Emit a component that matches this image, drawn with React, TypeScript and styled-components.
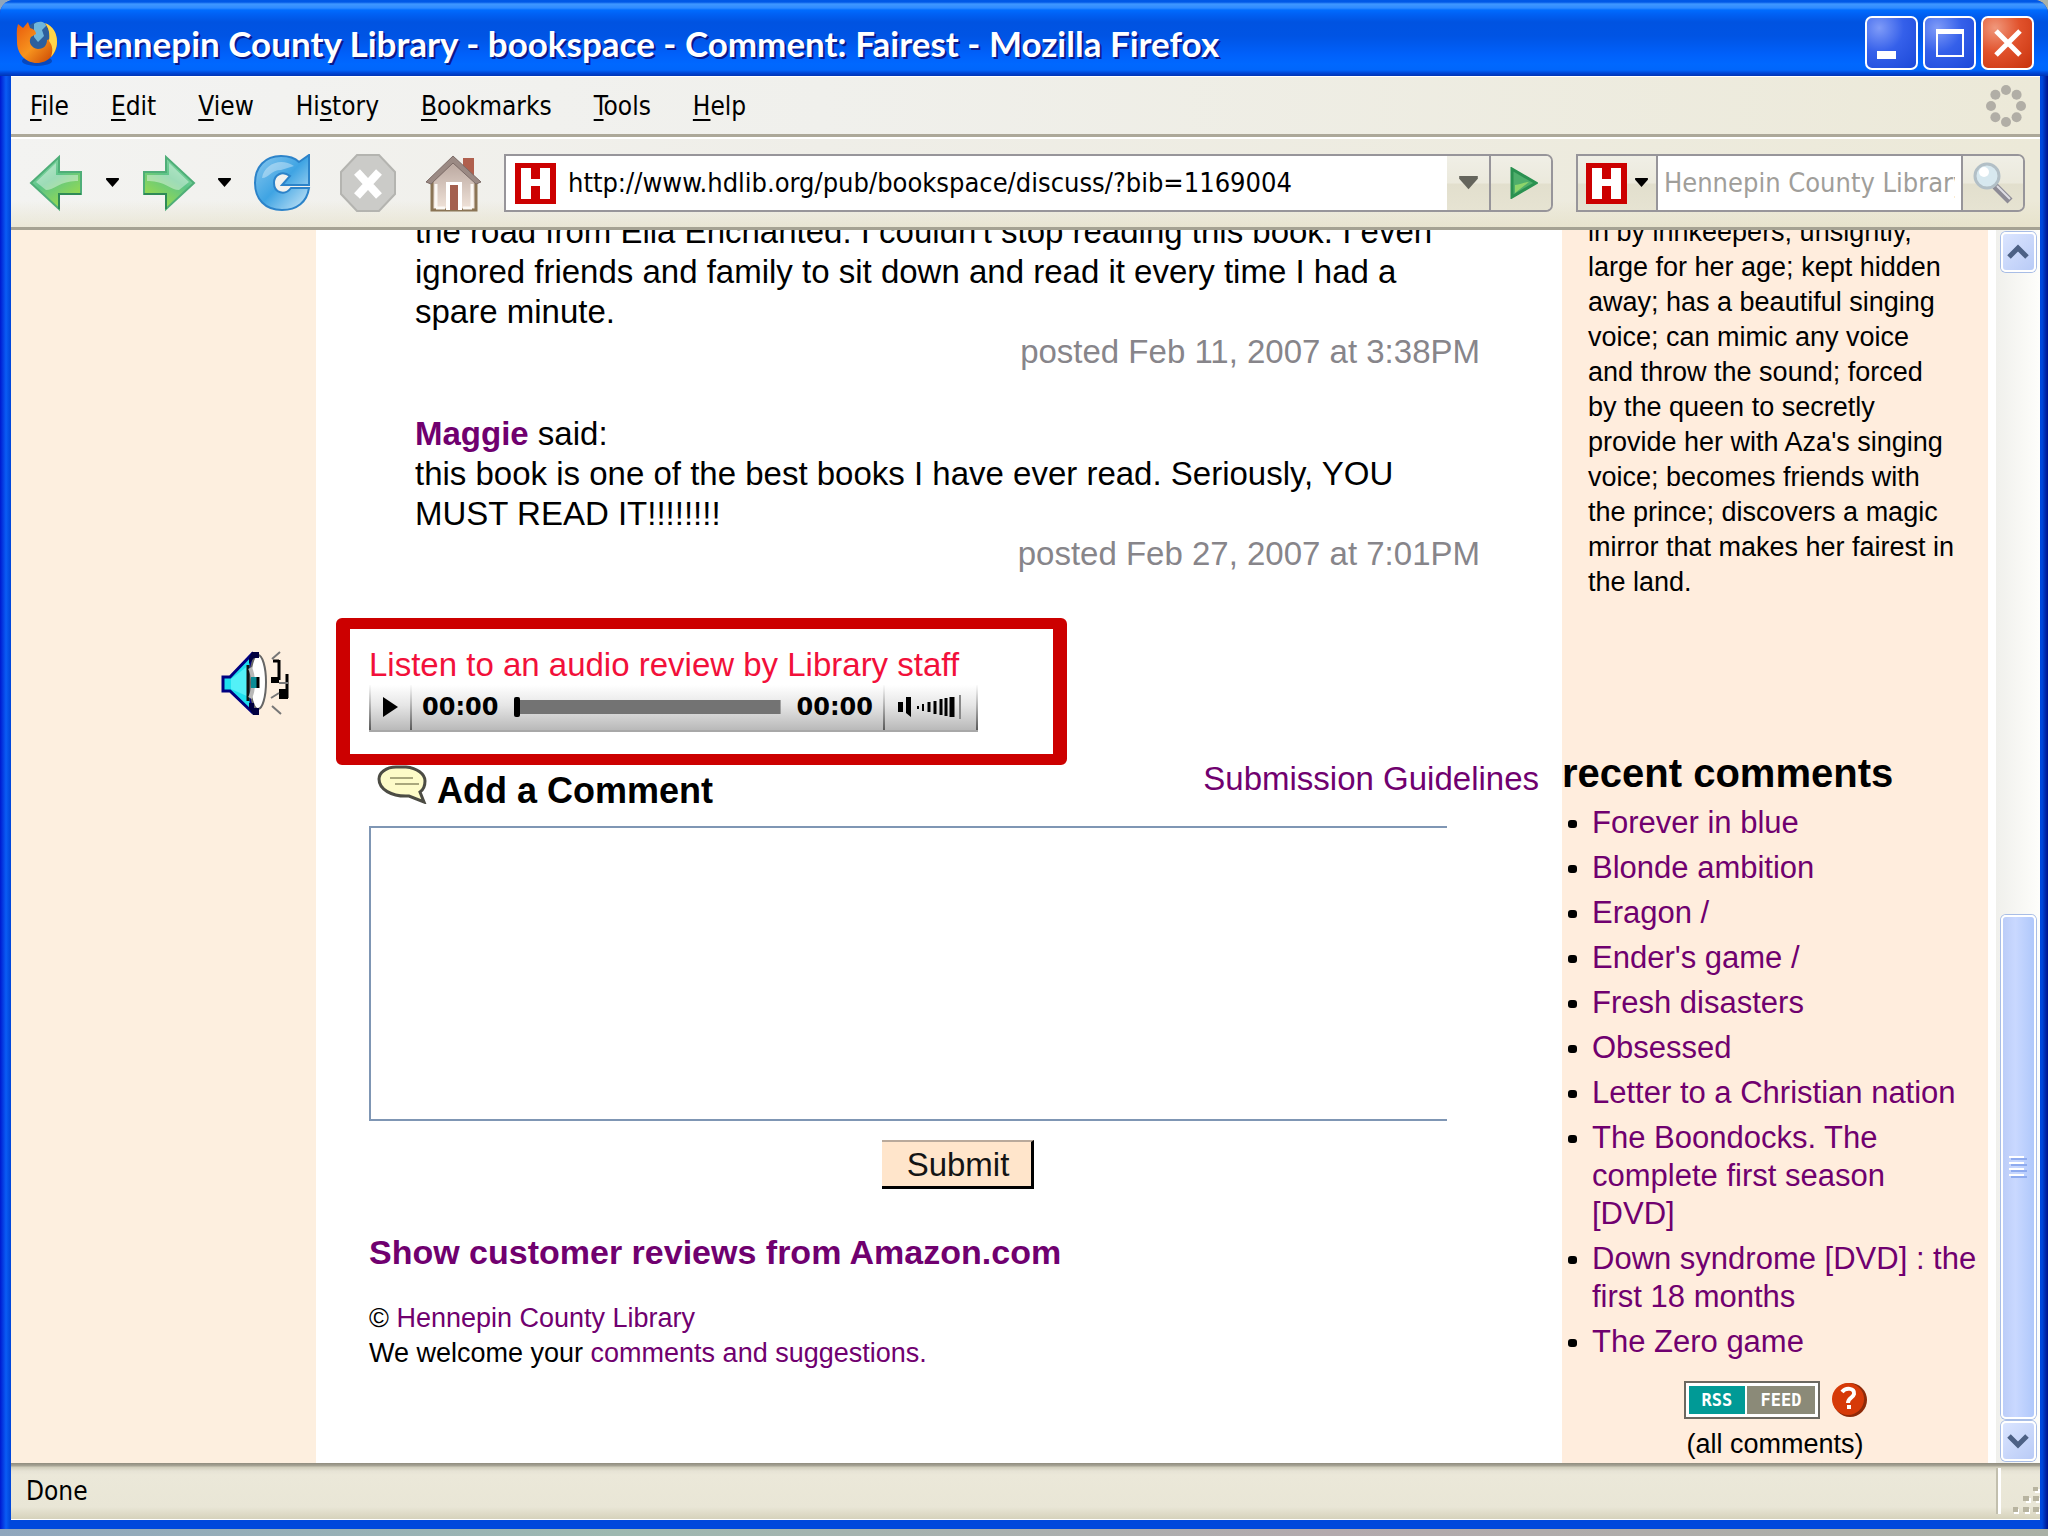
import React from "react";
import styled, { createGlobalStyle } from "styled-components";

const ui = '"DejaVu Sans Condensed", "Noto Sans", sans-serif';
const sans = '"Liberation Sans", Arial, sans-serif';
const purple = "#70006f";

const GlobalStyle = createGlobalStyle`
  * { box-sizing: border-box; }
  html, body, #root { height: 100%; margin: 0; }
  body { background: #9fb0b4; font-family: ${sans}; color: #000; overflow: hidden; }
  button { font: inherit; color: inherit; margin: 0; }
  h1, h2, p, ul { margin: 0; padding: 0; }
  a { text-decoration: none; }
  svg { display: block; flex: none; }
`;

/* ---------- window frame ---------- */

const Desktop = styled.div`
  height: 100vh;
  padding-bottom: 7px;
  background: linear-gradient(90deg, #8fa6bd, #9db8b0 30%, #b3a9ad 65%, #a9b0a6);
`;

const Window = styled.div`
  height: 100%;
  display: flex;
  flex-direction: column;
  border-radius: 14px 14px 0 0;
  overflow: hidden;
  background: linear-gradient(90deg, #0019cf, #0a5cf5 6px, #0048dc 10px, #0048dc calc(100% - 6px), #00138c);
`;

const TitleBar = styled.header`
  height: 76px;
  flex: none;
  display: flex;
  align-items: center;
  gap: 10px;
  padding: 10px 14px 0 16px;
  background: linear-gradient(
    #0058e6 0, #0058e6 2px, #3f97ff 4px, #2f8bff 8px, #006cff 10px, #0061f5 14px,
    #0053e1 22px, #0054e4 36px, #0060fa 54px, #0068ff 64px, #0066fc 70px, #0046d6 73px, #0034b4 76px
  );
`;

const Title = styled.h1`
  flex: 1;
  font: 700 35px/40px Lato, "Open Sans", sans-serif;
  color: #fff;
  text-shadow: 2px 2px 0 #0a1a8c;
  white-space: nowrap;
`;

const Caption = styled.button<{ $close?: boolean }>`
  width: 53px;
  height: 54px;
  padding: 0;
  border: 2px solid #fff;
  border-radius: 7px;
  display: grid;
  place-items: center;
  background: ${(p) =>
    p.$close
      ? "radial-gradient(circle at 25% 20%, #f0987c, #e1522c 45%, #c8320c)"
      : "radial-gradient(circle at 25% 20%, #7f9bf8, #3560ea 45%, #1c48d8)"};
`;

const CaptionGroup = styled.div`
  display: flex;
  gap: 5px;
`;

const Client = styled.div`
  flex: 1;
  min-height: 0;
  margin: 0 8px 9px 11px;
  display: flex;
  flex-direction: column;
`;

/* ---------- menu and toolbars ---------- */

const MenuBar = styled.nav`
  height: 61px;
  flex: none;
  display: flex;
  align-items: center;
  gap: 42px;
  padding: 0 14px 0 19px;
  border-top: 1px solid #fff;
  border-bottom: 3px solid #aca899;
  background: linear-gradient(90deg, #f3f3f2, #f0f0ec 40%, #ece9d8);
`;

const MenuItem = styled.button`
  padding: 0;
  border: 0;
  background: none;
  font: 26px/32px ${ui};
  u { text-underline-offset: 4px; text-decoration-thickness: 2px; }
`;

const Spacer = styled.span`
  flex: 1;
`;

const Toolbar = styled.div`
  height: 93px;
  flex: none;
  display: flex;
  align-items: center;
  padding: 0 15px 0 17px;
  border-top: 2px solid #fff;
  border-bottom: 3px solid #a5a293;
  background: linear-gradient(rgba(255, 255, 255, 0) 70%, rgba(226, 220, 190, 0.5)),
    linear-gradient(90deg, #f3f3f1, #efeee8 40%, #ece9d8);
`;

const NavButtons = styled.div`
  display: flex;
  align-items: center;
  margin-right: 22px;
`;

const IconButton = styled.button<{ $gap?: number }>`
  padding: 0;
  border: 0;
  background: none;
  margin-right: ${(p) => p.$gap ?? 0}px;
`;

const Field = styled.form<{ $grow?: boolean }>`
  height: 58px;
  display: flex;
  border: 2px solid #97959a;
  border-radius: 0 7px 7px 0;
  overflow: hidden;
  background: #ebe9da;
  ${(p) => (p.$grow ? "flex: 1; min-width: 0; margin-right: 23px;" : "width: 449px;")}
`;

const AddressPart = styled.label`
  flex: 1;
  min-width: 0;
  display: flex;
  align-items: center;
  gap: 12px;
  padding-left: 9px;
  background: #fff;
`;

const TextInput = styled.input<{ $hint?: boolean }>`
  flex: 1;
  min-width: 0;
  width: 100%;
  border: 0;
  padding: 0;
  outline: 0;
  background: #fff;
  font: 27px/32px ${ui};
  color: ${(p) => (p.$hint ? "#a09e9a" : "#000")};
  ${(p) => (p.$hint ? "padding: 0 6px; border-right: 2px solid #97959a; border-left: 2px solid #97959a;" : "")}
  &::placeholder { color: #a09e9a; opacity: 1; }
`;

const FieldButton = styled.button<{ $w: number; $rule?: boolean }>`
  width: ${(p) => p.$w}px;
  flex: none;
  padding: 0;
  border: 0;
  border-left: ${(p) => (p.$rule ? "2px solid #97959a" : "0")};
  display: flex;
  align-items: center;
  justify-content: center;
  gap: 8px;
  background: linear-gradient(#f0efe6, #ebe9dc 50%, #e2dfcd 52%, #e6e3d2);
`;

/* ---------- page ---------- */

const Viewport = styled.div`
  flex: 1;
  min-height: 0;
  display: flex;
  overflow: hidden;
  background: #fff;
`;

const Gutter = styled.aside`
  width: 305px;
  flex: none;
  padding: 421px 25px 0 0;
  display: flex;
  justify-content: flex-end;
  align-items: flex-start;
  background: #fdefdf;
`;

const Main = styled.main`
  flex: 1;
  min-width: 0;
  font-size: 33px;
  line-height: 40px;
`;

const Comments = styled.section`
  display: flex;
  flex-direction: column;
  gap: 42px;
  margin-top: -18px;
  padding: 0 82px 0 99px;
`;

const Posted = styled.p`
  text-align: right;
  color: #87858a;
`;

const Link = styled.a<{ $bold?: boolean }>`
  color: ${purple};
  font-weight: ${(p) => (p.$bold ? 700 : 400)};
`;

const AudioBox = styled.section`
  width: 731px;
  max-width: 100%;
  margin: 44px 0 0 20px;
  padding: 16px 19px 22px;
  border: solid #cc0000;
  border-width: 11px 14px;
  border-radius: 6px;
`;

const AudioTitle = styled.p`
  color: #f2103a;
`;

const Player = styled.div`
  width: 609px;
  height: 47px;
  display: flex;
  align-items: stretch;
  border-bottom: 2px solid #a8a8a8;
  background: linear-gradient(#fff, #e6e6e6 45%, #b9b9b9);
`;

const PlayerCell = styled.button<{ $w: number }>`
  width: ${(p) => p.$w}px;
  flex: none;
  padding: 0 0 2px;
  display: grid;
  place-items: center;
  background: none;
  border: solid;
  border-width: 0 2px;
  border-image: linear-gradient(#ffffff, #555) 1;
`;

const Track = styled.div`
  flex: 1;
  display: flex;
  align-items: center;
  gap: 16px;
  padding: 0 10px 2px;
  font: 700 24px/24px "DejaVu Sans", sans-serif;
`;

const Seek = styled.input`
  flex: 1;
  min-width: 0;
  height: 20px;
  margin: 0;
  appearance: none;
  background: linear-gradient(#737373, #737373) center / 100% 14px no-repeat;
  &::-webkit-slider-thumb {
    appearance: none;
    width: 6px;
    height: 20px;
    border-radius: 2px;
    background: #000;
  }
`;

const CommentForm = styled.form`
  padding: 0 15px 0 53px;
`;

const FormHead = styled.div`
  height: 61px;
  display: flex;
  align-items: flex-start;
  padding: 0 8px;
`;

const FormTitle = styled.label`
  flex: 1;
  padding: 6px 0 0 10px;
  font-size: 36px;
  font-weight: 700;
`;

const Guidelines = styled(Link)`
  line-height: 28px;
`;

const CommentText = styled.textarea`
  display: block;
  width: calc(100% - 100px);
  height: 295px;
  border: 2px solid #7f96b4;
  border-right: 0;
  background: #fff;
  resize: none;
  outline: 0;
  font: inherit;
`;

const Submit = styled.button`
  display: block;
  height: 49px;
  margin: 19px auto 0;
  padding: 2px 22px 0 25px;
  border: solid #000;
  border-width: 2px 3px 3px 0;
  border-top-color: #b9a99b;
  background: #ffe5cb;
  color: #141414;
`;

const PageFoot = styled.footer`
  padding: 43px 0 0 53px;
`;

const ReviewsLink = styled(Link)`
  font-size: 34px;
`;

const Legal = styled.p`
  margin-top: 28px;
  font-size: 27px;
  line-height: 35px;
`;

const Side = styled.aside`
  width: 426px;
  flex: none;
  margin-right: 8px;
  background: #ffeddd;
`;

const Blurb = styled.p`
  margin-top: -15px;
  padding: 0 30px 0 26px;
  font-size: 27px;
  line-height: 35px;
`;

const SideTitle = styled.h2`
  margin-top: 151px;
  font-size: 40px;
  line-height: 44px;
`;

const Recent = styled.ul`
  display: flex;
  flex-direction: column;
  gap: 7px;
  margin-top: 9px;
  list-style: none;
  font-size: 31px;
  line-height: 38px;
  white-space: pre-line;
`;

const RecentItem = styled.li`
  display: flex;
  &::before {
    content: "";
    flex: none;
    width: 9px;
    height: 8px;
    margin: 16px 15px 0 6px;
    border-radius: 3px;
    background: #000;
  }
`;

const Feed = styled.div`
  display: flex;
  justify-content: center;
  gap: 11px;
  margin-top: 20px;
`;

const RssBadge = styled.a`
  width: 136px;
  height: 38px;
  display: flex;
  gap: 2px;
  padding: 3px;
  border: 2px solid #6b6860;
  background: #fff;
  color: #fff;
  font: 700 17px/28px "DejaVu Sans Mono", monospace;
`;

const RssHalf = styled.span<{ $bg: string }>`
  flex: 1 0 auto;
  text-align: center;
  background: ${(p) => p.$bg};
`;

const AllComments = styled.p`
  margin-top: 8px;
  text-align: center;
  font-size: 27px;
  line-height: 35px;
`;

/* ---------- scroll bar and status bar ---------- */

const ScrollBar = styled.div`
  width: 44px;
  flex: none;
  display: flex;
  flex-direction: column;
  align-items: center;
  gap: 2px;
  padding: 2px 0;
  background: linear-gradient(90deg, #f0f0ec, #fefefb);
`;

const ScrollButton = styled.button`
  width: 35px;
  height: 40px;
  flex: none;
  padding: 0;
  display: grid;
  place-items: center;
  border: 2px solid #fff;
  border-radius: 5px;
  box-shadow: 0 0 0 1px #a8bde6;
  background: linear-gradient(135deg, #dbe5ff, #b9cbf6);
`;

const Rail = styled.div`
  flex: 1;
  width: 35px;
  display: flex;
  flex-direction: column;
  justify-content: flex-end;
`;

const Thumb = styled.div`
  height: 44%;
  display: grid;
  align-content: center;
  justify-content: center;
  border: 2px solid #fff;
  border-radius: 5px;
  box-shadow: 0 0 0 1px #a8bde6;
  background: linear-gradient(90deg, #bccdf8, #c9d8ff 40%, #b0c8fb);
`;

const StatusBar = styled.footer`
  height: 57px;
  flex: none;
  display: flex;
  align-items: center;
  padding-left: 15px;
  border-bottom: 1px solid #fff;
  background: linear-gradient(#8f8c7e 0, #a9a698 3px, #cfccba 4px, #e6e3d5 8px, #ebe8d9 12px, #e9e6d6 44px, #d6d2bb);
  font: 26px/32px ${ui};
`;

const Grip = styled.div`
  width: 44px;
  align-self: stretch;
  margin: 5px 0;
  border-left: 2px solid #c2bfae;
  box-shadow: inset 3px 0 0 #fff;
  display: flex;
  align-items: flex-end;
  justify-content: flex-end;
`;

/* ---------- drawings ---------- */

const Firefox = () => (
  <svg width="42" height="50" viewBox="0 0 42 50">
    <defs>
      <linearGradient id="fox" x1="0" y1="0" x2="1" y2="1">
        <stop offset="0" stopColor="#e8590c" />
        <stop offset=".5" stopColor="#f7941e" />
        <stop offset="1" stopColor="#c43c00" />
      </linearGradient>
    </defs>
    <ellipse cx="21" cy="43" rx="15" ry="5" fill="#0b2a80" opacity=".5" />
    <circle cx="23" cy="20" r="16" fill="#2c5f9e" />
    <path d="M18 6c5-4 12-2 12 2l-4 4 2 6-6 6-4-5z" fill="#6fb6dc" />
    <path d="M2 6l5 4 5-6 2 6c4 1 6 3 6 6l-5 3c-3 5 0 11 7 12 6 0 9-4 9-9l3-1c0-6-1-11-5-15 7 2 12 9 12 18 0 12-9 21-20 21S1 36 1 24c0-6-1-12 1-18z" fill="url(#fox)" />
    <path d="M29 5c8 3 12 10 12 19 0 6-3 12-6 15 2-6 2-11-2-16 1-7 0-13-4-18z" fill="#ffd54a" />
  </svg>
);

const Arrow = ({ flip }: { flip?: boolean }) => (
  <svg width="55" height="58" viewBox="0 0 55 58">
    <defs>
      <linearGradient id={flip ? "gf" : "gb"} x1="0" y1="0" x2=".6" y2="1">
        <stop offset="0" stopColor="#9fe3b8" />
        <stop offset=".5" stopColor="#5cc487" />
        <stop offset="1" stopColor="#9bdc4c" />
      </linearGradient>
    </defs>
    <g transform={flip ? "matrix(-1 0 0 1 55 0)" : undefined}>
      <path d="M3 29L31 3v15h22v22H31v15z" fill={`url(#${flip ? "gf" : "gb"})`} stroke="#4fae78" strokeWidth="2" />
      <path d="M31 55V40h22" fill="none" stroke="#2f8a56" strokeWidth="2" />
      <path d="M8 28L28 9v12h22v6C34 26 26 36 18 36z" fill="#fff" opacity=".4" />
    </g>
  </svg>
);

const Caret = ({ color = "#000", w = 13 }: { color?: string; w?: number }) => (
  <svg width={w} height={w * 0.7} viewBox="0 0 14 10">
    <path d="M0 0h14v2L7 10 0 2z" fill={color} />
  </svg>
);

const Reload = () => (
  <svg width="58" height="58" viewBox="0 0 58 58">
    <defs>
      <linearGradient id="rl" x1="0" y1="0" x2="1" y2="1">
        <stop offset="0" stopColor="#8cc9ef" />
        <stop offset=".5" stopColor="#3fa4e3" />
        <stop offset="1" stopColor="#cfe9f8" />
      </linearGradient>
    </defs>
    <path d="M28 2c8 0 14 2 18 6l10-7v30H29l8-9c-8-6-16-1-16 7 0 10 11 13 17 5h18C54 48 44 56 29 56 12 56 2 45 2 29S12 2 28 2z" fill="url(#rl)" stroke="#2c83c9" strokeWidth="2" />
    <path d="M9 24C11 10 28 3 41 12L28 16C18 16 16 24 9 24z" fill="#fff" opacity=".35" />
  </svg>
);

const Stop = () => (
  <svg width="56" height="58" viewBox="0 0 56 58">
    <path d="M17 1h22l16 17v22L39 57H17L1 40V18z" fill="#cbcbc8" stroke="#b4b4b0" strokeWidth="2" />
    <path d="M17 18l22 24M39 18L17 42" stroke="#fff" strokeWidth="8" />
  </svg>
);

const Home = () => (
  <svg width="57" height="58" viewBox="0 0 57 58">
    <defs>
      <linearGradient id="wall" x1="0" y1="0" x2="0" y2="1">
        <stop offset="0" stopColor="#b7a49c" />
        <stop offset="1" stopColor="#f1e4da" />
      </linearGradient>
    </defs>
    <path d="M38 4h11v20H38z" fill="#b0604e" />
    <path d="M7 27L28 6l23 21v29H7z" fill="url(#wall)" stroke="#8a7455" strokeWidth="3" />
    <path d="M11 30v24M47 30v24M11 54h9M38 54h9" stroke="#fbf8f4" strokeWidth="3" />
    <path d="M1 28L28 2l28 26-5 2L28 9 6 30z" fill="#9b8a84" stroke="#7d6c68" />
    <path d="M21 28h16v28H21z" fill="#fff" />
    <path d="M25 31h8v25h-8z" fill="#a4604f" />
  </svg>
);

const LibraryMark = () => (
  <svg width="41" height="41" viewBox="0 0 41 41">
    <path d="M0 0h41v41H0z" fill="#cc0000" />
    <path d="M6 5h10v11h9V5h10v31H25V23h-9v13H6z" fill="#fff" />
  </svg>
);

const Go = () => (
  <svg width="34" height="32" viewBox="-6 0 34 32">
    <path d="M2 2l24 14L2 30z" fill="#4fae6b" stroke="#2a9150" strokeWidth="3" />
    <path d="M5 18c6 0 9-3 14-3L5 26z" fill="#8ed46a" />
  </svg>
);

const Lens = () => (
  <svg width="40" height="42" viewBox="0 0 40 42">
    <path d="M22 24l15 15" stroke="#8d8b95" strokeWidth="7" />
    <path d="M24 24l13 13" stroke="#dedee4" strokeWidth="2" />
    <circle cx="14" cy="14" r="12" fill="#d7e8ef" stroke="#b2bfc6" strokeWidth="3" />
    <circle cx="11" cy="10" r="5" fill="#fff" />
  </svg>
);

const Throbber = () => (
  <svg width="40" height="42" viewBox="0 0 40 42" fill="#b1aea6">
    {[0, 1, 2, 3, 4, 5, 6, 7].map((n) => (
      <circle key={n} cx={20 + 15 * Math.sin((n * Math.PI) / 4)} cy={21 - 16 * Math.cos((n * Math.PI) / 4)} r="5" />
    ))}
  </svg>
);

const Speaker = () => (
  <svg width="70" height="64" viewBox="0 0 70 64">
    <path d="M2 26h7L30 4v56L9 40H2z" fill="#1fe0ee" stroke="#000080" strokeWidth="3" />
    <path d="M10 28l18-14v32L10 38z" fill="#8ff" opacity=".5" />
    <ellipse cx="37" cy="31" rx="8" ry="27" fill="#fff" stroke="#666" strokeWidth="2" />
    <path d="M31 1h7v6h-5l-5 6v-6zM28 52h5v5h5v7h-6l-4-7z" fill="#000040" />
    <path d="M27 14v36" stroke="#111" strokeWidth="3" />
    <path d="M29 17c4 8 4 22 0 30" fill="none" stroke="#b8b8b8" strokeWidth="4" />
    <path d="M30 26h7v11h-7z" fill="#0a8c96" />
    <path d="M37 26v11" stroke="#000" strokeWidth="3" />
    <path d="M58 9v20M58 10h-6M66 23v24" stroke="#000" strokeWidth="3" />
    <path d="M50 26h8v6h-8zM58 38h9v10h-9z" />
    <path d="M51 8l8-7M58 32h9M50 47l8-5M51 55l9 8" stroke="#777" strokeWidth="2" />
  </svg>
);

const Volume = () => (
  <svg width="66" height="26" viewBox="0 0 66 26">
    <path d="M0 8h5v10H0zM8 3h5v20l-5-4V8z" />
    <path d="M20 12v3M25 10v7" stroke="#000" strokeWidth="2" />
    <path d="M31 8v10M37 7v13M43 5v16M48 4v18" stroke="#000" strokeWidth="3" />
    <path d="M54 3v20" stroke="#000" strokeWidth="5" />
    <path d="M62 1v24" stroke="#888" strokeWidth="2" />
  </svg>
);

const Bubble = () => (
  <svg width="50" height="39" viewBox="0 0 50 39">
    <path d="M19 2h10c11 1 19 7 19 14 0 5-2 9-5 11l4 10-15-6C14 32 2 24 2 14 2 8 9 2 19 2z" fill="#fdfbc8" stroke="#4c4c44" strokeWidth="3" />
    <path d="M13 13h23M18 19h24" stroke="#a9a77c" strokeWidth="2" />
  </svg>
);

const Help = () => (
  <svg width="36" height="37" viewBox="0 0 36 37">
    <circle cx="19" cy="19" r="17" fill="#8e2a08" />
    <circle cx="17" cy="18" r="16" fill="#d63a08" />
    <path d="M11 11c4-5 13-4 12 2-1 4-6 4-6 9M16 26h4" fill="none" stroke="#fff" strokeWidth="4" />
  </svg>
);

const Chevron = ({ down }: { down?: boolean }) => (
  <svg width="22" height="16" viewBox="0 0 22 16">
    <path d={down ? "M2 3l9 9 9-9" : "M2 13l9-9 9 9"} fill="none" stroke="#4d6185" strokeWidth="5" />
  </svg>
);

const menus: [string, string, string][] = [
  ["", "F", "ile"],
  ["", "E", "dit"],
  ["", "V", "iew"],
  ["Hi", "s", "tory"],
  ["", "B", "ookmarks"],
  ["", "T", "ools"],
  ["", "H", "elp"],
];

const recent = [
  "Forever in blue",
  "Blonde ambition",
  "Eragon /",
  "Ender's game /",
  "Fresh disasters",
  "Obsessed",
  "Letter to a Christian nation",
  "The Boondocks. The\ncomplete first season\n[DVD]",
  "Down syndrome [DVD] : the\nfirst 18 months",
  "The Zero game",
];

export default function App() {
  return (
    <Desktop>
      <GlobalStyle />
      <Window>
        <TitleBar>
          <Firefox />
          <Title>Hennepin County Library - bookspace - Comment: Fairest - Mozilla Firefox</Title>
          <CaptionGroup>
            <Caption aria-label="Minimize">
              <svg width="38" height="38" viewBox="0 0 38 38"><path d="M4 27h19v8H4z" fill="#fff" /></svg>
            </Caption>
            <Caption aria-label="Maximize">
              <svg width="28" height="28" viewBox="0 0 28 28">
                <path d="M1 1h26v26H1z" fill="none" stroke="#fff" strokeWidth="2" />
                <path d="M0 0h28v5H0z" fill="#fff" />
              </svg>
            </Caption>
            <Caption $close aria-label="Close">
              <svg width="28" height="28" viewBox="0 0 28 28"><path d="M2 2l24 24M26 2L2 26" stroke="#fff" strokeWidth="5" /></svg>
            </Caption>
          </CaptionGroup>
        </TitleBar>
        <Client>
          <MenuBar>
            {menus.map(([a, b, c]) => (
              <MenuItem key={b + c}>{a}<u>{b}</u>{c}</MenuItem>
            ))}
            <Spacer />
            <Throbber />
          </MenuBar>
          <Toolbar>
            <NavButtons>
              <IconButton aria-label="Back" $gap={23}><Arrow /></IconButton>
              <IconButton aria-label="Back history" $gap={23}><Caret /></IconButton>
              <IconButton aria-label="Forward" $gap={21}><Arrow flip /></IconButton>
              <IconButton aria-label="Forward history" $gap={22}><Caret /></IconButton>
              <IconButton aria-label="Reload" $gap={29}><Reload /></IconButton>
              <IconButton aria-label="Stop" $gap={29}><Stop /></IconButton>
              <IconButton aria-label="Home"><Home /></IconButton>
            </NavButtons>
            <Field $grow onSubmit={(e) => e.preventDefault()}>
              <AddressPart>
                <LibraryMark />
                <TextInput aria-label="Address" defaultValue="http://www.hdlib.org/pub/bookspace/discuss/?bib=1169004" />
              </AddressPart>
              <FieldButton type="button" $w={42} aria-label="Address history"><Caret color="#65655c" w={19} /></FieldButton>
              <FieldButton $w={62} $rule aria-label="Go"><Go /></FieldButton>
            </Field>
            <Field onSubmit={(e) => e.preventDefault()}>
              <FieldButton type="button" $w={78} aria-label="Search engine"><LibraryMark /><Caret /></FieldButton>
              <TextInput $hint aria-label="Search" placeholder="Hennepin County Library" />
              <FieldButton $w={60} aria-label="Search"><Lens /></FieldButton>
            </Field>
          </Toolbar>

          <Viewport>
            <Gutter><Speaker /></Gutter>
            <Main>
              <Comments>
                <article>
                  <p>
                    the road from Ella Enchanted. I couldn't stop reading this book. I even ignored friends
                    and family to sit down and read it every time I had a spare minute.
                  </p>
                  <Posted>posted Feb 11, 2007 at 3:38PM</Posted>
                </article>
                <article>
                  <p><Link $bold href="#maggie">Maggie</Link> said:</p>
                  <p>this book is one of the best books I have ever read. Seriously, YOU MUST READ IT!!!!!!!!</p>
                  <Posted>posted Feb 27, 2007 at 7:01PM</Posted>
                </article>
              </Comments>

              <AudioBox>
                <AudioTitle>Listen to an audio review by Library staff</AudioTitle>
                <Player>
                  <PlayerCell $w={43} aria-label="Play">
                    <svg width="15" height="20" viewBox="0 0 15 20"><path d="M0 0l15 10L0 20z" /></svg>
                  </PlayerCell>
                  <Track>
                    <span>00:00</span>
                    <Seek type="range" aria-label="Seek" defaultValue={0} />
                    <span>00:00</span>
                  </Track>
                  <PlayerCell $w={95} aria-label="Volume"><Volume /></PlayerCell>
                </Player>
              </AudioBox>

              <CommentForm onSubmit={(e) => e.preventDefault()}>
                <FormHead>
                  <Bubble />
                  <FormTitle htmlFor="comment">Add a Comment</FormTitle>
                  <Guidelines href="#guidelines">Submission Guidelines</Guidelines>
                </FormHead>
                <CommentText id="comment" />
                <Submit>Submit</Submit>
              </CommentForm>

              <PageFoot>
                <ReviewsLink $bold href="#reviews">Show customer reviews from Amazon.com</ReviewsLink>
                <Legal>
                  © <Link href="#library">Hennepin County Library</Link><br />
                  We welcome your <Link href="#feedback">comments and suggestions.</Link>
                </Legal>
              </PageFoot>
            </Main>

            <Side>
              <Blurb>
                in by innkeepers; unsightly, large for her age; kept hidden away; has a beautiful singing
                voice; can mimic any voice and throw the sound; forced by the queen to secretly provide her
                with Aza's singing voice; becomes friends with the prince; discovers a magic mirror that
                makes her fairest in the land.
              </Blurb>
              <SideTitle>recent comments</SideTitle>
              <Recent>
                {recent.map((t) => (
                  <RecentItem key={t}><Link href="#book">{t}</Link></RecentItem>
                ))}
              </Recent>
              <Feed>
                <RssBadge href="#rss">
                  <RssHalf $bg="#009a96">RSS</RssHalf>
                  <RssHalf $bg="#8b8a78">FEED</RssHalf>
                </RssBadge>
                <Help />
              </Feed>
              <AllComments>(all comments)</AllComments>
            </Side>

            <ScrollBar>
              <ScrollButton aria-label="Scroll up"><Chevron /></ScrollButton>
              <Rail>
                <Thumb>
                  <svg width="18" height="22" viewBox="0 0 18 22">
                    <path d="M0 1h15M0 7h15M0 13h15M0 19h15" stroke="#fff" strokeWidth="2" />
                    <path d="M2 3h16M2 9h16M2 15h16M2 21h16" stroke="#8fabef" strokeWidth="2" />
                  </svg>
                </Thumb>
              </Rail>
              <ScrollButton aria-label="Scroll down"><Chevron down /></ScrollButton>
            </ScrollBar>
          </Viewport>

          <StatusBar>
            Done
            <Spacer />
            <Grip>
              <svg width="28" height="30" viewBox="0 0 28 30">
                <path d="M23 5h5v4h-5zM14 14h5v5h-5zM24 14h4v5h-4zM2 25h5v5H2zM13 25h5v5h-5zM24 25h4v5h-4z" fill="#fff" />
                <path d="M21 3h5v4h-5zM11 12h6v5h-6zM21 12h6v5h-6zM1 23h5v5H1zM11 23h6v5h-6zM21 23h6v5h-6z" fill="#b8b4a0" />
              </svg>
            </Grip>
          </StatusBar>
        </Client>
      </Window>
    </Desktop>
  );
}
